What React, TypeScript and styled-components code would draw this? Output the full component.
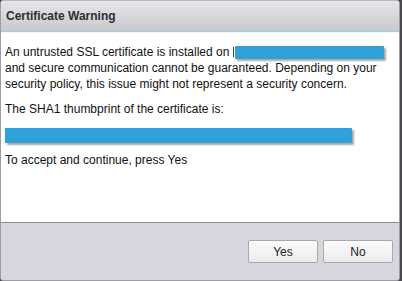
import * as React from 'react';
import styled, { createGlobalStyle } from 'styled-components';

const GlobalStyle = createGlobalStyle`
  html, body {
    margin: 0;
    padding: 0;
    background: #4b4b4f;
  }
  body {
    font-family: "Liberation Sans", Arial, sans-serif;
  }
`;

const Dialog = styled.div`
  width: 398px;
  height: 279px;
  display: flex;
  flex-direction: column;
  border: 1px solid #9c9ca4;
  border-top-color: #b8b8bd;
  border-radius: 4px;
  overflow: hidden;
  background: #fff;
`;

const Header = styled.div`
  height: 30px;
  flex: none;
  display: flex;
  align-items: center;
  padding-left: 5px;
  background: linear-gradient(#e6e6ea, #c8c8cd);
  border-bottom: 1px solid #9fcde0;
`;

const Title = styled.span`
  font-size: 12px;
  font-weight: bold;
  color: #2e2e2e;
`;

const Body = styled.div`
  flex: 1;
  padding: 11px 4px 0 4px;
  background: #fff;
  border-top: 1px solid #eef9fc;
  border-bottom: 1px solid #8c8c90;
`;

const Paragraph = styled.p<{ $gap?: number }>`
  margin: 0 0 ${(p) => p.$gap ?? 9}px 0;
  font-size: 12px;
  line-height: 16px;
  color: #111;
`;

const Redacted = styled.span<{ $width: number; $height: number }>`
  display: inline-block;
  vertical-align: ${(p) => (p.$width > 200 ? 'top' : '-3px')};
  width: ${(p) => p.$width}px;
  height: ${(p) => p.$height}px;
  background: #30a0d9;
  box-shadow: 2px 2px 2px rgba(0, 0, 0, 0.35);
  border-radius: 1px;
`;

const Cursor = styled.span`
  display: inline-block;
  width: 1px;
  height: 10px;
  margin-right: 1px;
  vertical-align: -1px;
  background: #444;
`;

const Footer = styled.div`
  height: 57px;
  flex: none;
  display: flex;
  justify-content: flex-end;
  align-items: center;
  gap: 5px;
  padding-right: 6px;
  background: #d6d7de;
`;

const Button = styled.button`
  width: 70px;
  height: 23px;
  padding: 0;
  margin-top: 0;
  font-family: "Liberation Sans", Arial, sans-serif;
  font-size: 12px;
  color: #222;
  background: linear-gradient(#fbfbfb, #ececee);
  border: 1px solid #a9a9ae;
  border-radius: 2px;
`;

export default function App() {
  return (
    <>
      <GlobalStyle />
      <Dialog>
        <Header>
          <Title>Certificate Warning</Title>
        </Header>
        <Body>
          <Paragraph>
            An untrusted SSL certificate is installed on <Cursor />
            <Redacted $width={149} $height={13} />
            <br />
            and secure communication cannot be guaranteed. Depending on your security policy, this
            issue might not represent a security concern.
          </Paragraph>
          <Paragraph $gap={11}>The SHA1 thumbprint of the certificate is:</Paragraph>
          <Paragraph $gap={8}>
            <Redacted $width={347} $height={15} />
          </Paragraph>
          <Paragraph>To accept and continue, press Yes</Paragraph>
        </Body>
        <Footer>
          <Button>Yes</Button>
          <Button>No</Button>
        </Footer>
      </Dialog>
    </>
  );
}
